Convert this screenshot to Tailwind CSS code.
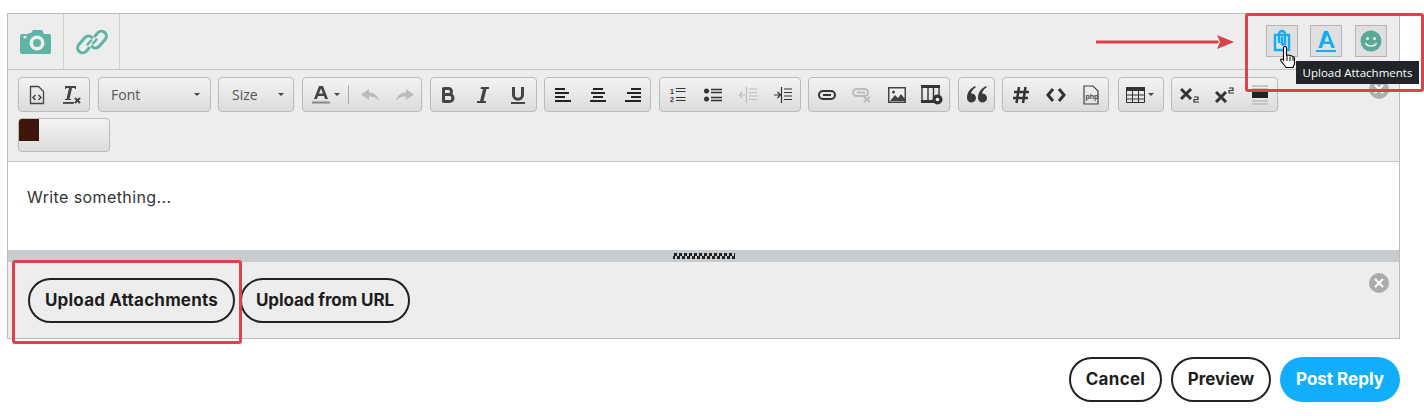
<!DOCTYPE html>
<html lang="en">
<head>
<meta charset="UTF-8">
<title>Reply editor</title>
<script src="https://cdn.jsdelivr.net/npm/@tailwindcss/browser@4"></script>
</head>
<body class="bg-white font-['Inter',sans-serif] text-[#1e1e1e] overflow-hidden">
<div class="relative w-[1424px] h-[416px] pt-[13px] pl-[7px]">

  <!-- editor box -->
  <div class="w-[1393px] h-[326px] border border-[#bcbcbc] bg-[#ededed] flex flex-col">

    <!-- top bar -->
    <div class="h-[56px] border-b border-[#c4c4c4] flex items-stretch">
      <div class="w-[56px] border-r border-[#d0d0d0] flex items-center justify-center">
        <svg width="32" height="26" viewBox="0 0 32 26"><path fill="#5fb5a5" d="M2 5h6l1-1h2l2-3h9l2 4h5a2 2 0 0 1 2 2v16a2 2 0 0 1-2 2H2a2 2 0 0 1-2-2V7a2 2 0 0 1 2-2z"/><circle cx="5" cy="8" r="1.600" fill="#ededed"/><circle cx="17" cy="14" r="7.500" fill="#ededed"/><circle cx="17" cy="14" r="4" fill="#5fb5a5"/></svg>
      </div>
      <div class="w-[56px] border-r border-[#d0d0d0] flex items-center justify-center">
        <svg width="32" height="28" viewBox="0 0 32 28" fill="none" stroke="#5fb5a5" stroke-width="3" stroke-linecap="round"><path d="M13 20l-3 3.500a5 5 0 0 1-7.500-6.500l6-7a5 5 0 0 1 7.500-.5"/><path d="M19 8l3-3.500a5 5 0 0 1 7.500 6.500l-6 7a5 5 0 0 1-7.500 .5"/><path d="M11.500 16.500l3.500-4" stroke-width="2.500"/><path d="M20.500 11.500l-3.500 4" stroke-width="2.500"/></svg>
      </div>
      <div class="ml-auto flex items-start pt-[11px] pr-[12px]">
        <div class="w-[32px] h-[32px] border border-[#b5b5b5] bg-[#dfdfdf] flex items-center justify-center">
          <svg width="20" height="24" viewBox="0 0 20 24" fill="none" stroke="#12aef5" stroke-width="2.400"><path d="M3 6h14v15H3z"/><path d="M7 14V5a3 3 0 0 1 6 0v10a2 2 0 0 1-3 0V8"/></svg>
        </div>
        <div class="ml-[12px] w-[32px] h-[32px] border border-[#b5b5b5] bg-[#dfdfdf] flex items-center justify-center">
          <svg width="22" height="24" viewBox="0 0 22 24"><path fill="#12aef5" d="M9 2h4l7 17h-3.500l-1.500-4H8.500L7 19H3.500zM9.500 12.500h5L12 6z"/><rect x="1" y="21" width="20" height="2" fill="#12aef5"/></svg>
        </div>
        <div class="ml-[13px] w-[32px] h-[32px] border border-[#b5b5b5] bg-[#dfdfdf] flex items-center justify-center">
          <svg width="22" height="22" viewBox="0 0 22 22"><circle cx="11" cy="11" r="10.500" fill="#5aa897"/><circle cx="7.500" cy="8.500" r="1.500" fill="#ededed"/><circle cx="14.500" cy="8.500" r="1.500" fill="#ededed"/><path d="M5.500 13c1.500 4 9.500 4 11 0" fill="none" stroke="#ededed" stroke-width="1.600"/></svg>
        </div>
      </div>
    </div>

    <!-- toolbar -->
    <div class="relative h-[92px] border-b border-[#c4c4c4] pt-[7px] pl-[10px]">
      <div class="flex items-start h-[35px] text-[#444]">
        <div class="w-[72px] h-[35px] mr-[8px] flex items-center rounded-[4px] border border-[#bbb] bg-linear-to-b from-[#f3f3f3] to-[#dcdcdc]">
          <span class="w-[35px] flex justify-center"><svg width="16" height="20" viewBox="0 0 16 20" fill="none" stroke="#444"><path d="M1.500 1.500h8l5 5v12h-13z" stroke-width="1.300"/><path d="M6.500 10l-2.500 2.500 2.500 2.500M9.500 10l2.500 2.500-2.500 2.500" stroke-width="1.500"/></svg></span>
          <span class="w-[35px] flex justify-center"><svg width="20" height="20" viewBox="0 0 20 20"><path fill="#444" d="M3 1h11v3h-1l-.500-1H10L7.500 14H9v1H3v-1h1.500L7 3H4.500L4 4H3z"/><rect x="1" y="17" width="11" height="1.800" fill="#444"/><path d="M13 13l5 5m0-5l-5 5" stroke="#444" stroke-width="2"/></svg></span>
        </div>
        <div class="w-[113px] h-[35px] mr-[7px] pl-[12px] pr-[10px] pb-[1px] flex items-center justify-between rounded-[4px] border border-[#bbb] bg-linear-to-b from-[#f3f3f3] to-[#dcdcdc] font-['Open_Sans',sans-serif] text-[14px] text-[#555]">
          <span>Font</span><span class="w-0 h-0 border-x-[3px] border-x-transparent border-t-[3px] border-t-[#444]"></span>
        </div>
        <div class="w-[76px] h-[35px] mr-[8px] pl-[13px] pr-[9px] pb-[1px] flex items-center justify-between rounded-[4px] border border-[#bbb] bg-linear-to-b from-[#f3f3f3] to-[#dcdcdc] font-['Open_Sans',sans-serif] text-[14px] text-[#555]">
          <span>Size</span><span class="w-0 h-0 border-x-[3px] border-x-transparent border-t-[3px] border-t-[#444]"></span>
        </div>
        <div class="w-[120px] h-[35px] mr-[8px] flex items-center rounded-[4px] border border-[#bbb] bg-linear-to-b from-[#f3f3f3] to-[#dcdcdc]">
          <span class="ml-[8px] w-[20px] flex justify-center"><svg width="20" height="20" viewBox="0 0 20 20"><path fill="#444" d="M8 1h4l5 13h-3l-1-3H7l-1 3H3zM8 8.500h4L10 3.500z"/><rect x="1" y="16.500" width="18" height="2" fill="#888"/></svg></span>
          <span class="ml-[3px] w-0 h-0 border-x-[3px] border-x-transparent border-t-[3px] border-t-[#444]"></span>
          <span class="ml-[8px] w-px h-[19px] bg-[#aaa]"></span>
          <span class="ml-[8px] w-[26px] flex justify-center"><svg width="20" height="16" viewBox="0 0 20 16"><path fill="#bbb" d="M9 2v3.500c5 0 9 3 10 8.500-2-3-5-4.500-10-4.500V13L1 7.500z"/></svg></span>
          <span class="ml-[9px] w-[26px] flex justify-center"><svg width="20" height="16" viewBox="0 0 20 16"><path fill="#bbb" d="M11 2v3.500c-5 0-9 3-10 8.500 2-3 5-4.500 10-4.500V13l8-5.500z"/></svg></span>
        </div>
        <div class="w-[107px] h-[35px] mr-[7px] flex items-center rounded-[4px] border border-[#bbb] bg-linear-to-b from-[#f3f3f3] to-[#dcdcdc]">
          <span class="w-[35px] flex justify-center -ml-[1px]"><svg width="14" height="18" viewBox="0 0 14 18" fill="none" stroke="#444" stroke-width="3"><path d="M2.500 1.500v15M2.500 2.500h5a3 3 0 0 1 0 6h-5m0 0h6a3.500 3.500 0 0 1 0 7h-6"/></svg></span>
          <span class="w-[35px] flex justify-center"><svg width="14" height="18" viewBox="0 0 14 18"><path fill="#444" d="M5 1h8v2h-2.500L7.500 15H10v2H1v-2h3L7 3H4.500z"/></svg></span>
          <span class="w-[35px] flex justify-center"><svg width="14" height="18" viewBox="0 0 14 18" fill="none" stroke="#444"><path d="M2.500 1v8c0 5.500 9 5.500 9 0V1" stroke-width="3"/><path d="M0 17h14" stroke-width="2"/></svg></span>
        </div>
        <div class="w-[107px] h-[35px] mr-[8px] flex items-center rounded-[4px] border border-[#bbb] bg-linear-to-b from-[#f3f3f3] to-[#dcdcdc]">
          <span class="w-[35px] flex justify-center"><svg width="16" height="14" viewBox="0 0 16 14" stroke="#222" stroke-width="2"><path d="M0 1h10M0 5h14M0 9h10M0 13h16"/></svg></span>
          <span class="w-[35px] flex justify-center"><svg width="16" height="14" viewBox="0 0 16 14" stroke="#222" stroke-width="2"><path d="M3 1h10M1 5h14M3 9h10M0 13h16"/></svg></span>
          <span class="w-[35px] flex justify-center"><svg width="16" height="14" viewBox="0 0 16 14" stroke="#222" stroke-width="2"><path d="M6 1h10M2 5h14M6 9h10M0 13h16"/></svg></span>
        </div>
        <div class="w-[142px] h-[35px] mr-[7px] flex items-center rounded-[4px] border border-[#bbb] bg-linear-to-b from-[#f3f3f3] to-[#dcdcdc]">
          <span class="w-[35px] flex justify-center"><svg width="16" height="16" viewBox="0 0 16 16"><path stroke="#333" stroke-width="1.200" d="M6 1.500h9.500M6 4.500h9.500M6 10.500h9.500M6 13.500h9.500"/><text x="0" y="7" font-size="7" font-weight="700" fill="#333" font-family="Liberation Sans">1</text><text x="0" y="15" font-size="7" font-weight="700" fill="#333" font-family="Liberation Sans">2</text></svg></span>
          <span class="w-[35px] flex justify-center"><svg width="18" height="14" viewBox="0 0 18 14"><circle cx="2.500" cy="3" r="2.500" fill="#333"/><circle cx="2.500" cy="11" r="2.500" fill="#333"/><path stroke="#333" stroke-width="1.300" d="M7 1.500h11M7 4.500h11M7 9.500h11M7 12.500h11"/></svg></span>
          <span class="w-[35px] flex justify-center"><svg width="18" height="16" viewBox="0 0 18 16" stroke="#bbb" stroke-width="1.200" fill="none"><path d="M7.500 0v16M10 2h8M10 5.500h8M10 9h8M10 12.500h8M0 8h6M3 5L0.500 8 3 11"/></svg></span>
          <span class="w-[35px] flex justify-center"><svg width="18" height="16" viewBox="0 0 18 16" stroke="#333" stroke-width="1.200" fill="none"><path d="M7.500 0v16M10 2h8M10 5.500h8M10 9h8M10 12.500h8M0 8h6M3.500 5L6.500 8l-3 3"/></svg></span>
        </div>
        <div class="w-[142px] h-[35px] mr-[8px] flex items-center rounded-[4px] border border-[#bbb] bg-linear-to-b from-[#f3f3f3] to-[#dcdcdc]">
          <span class="w-[35px] flex justify-center"><svg width="18" height="10" viewBox="0 0 18 10" fill="none" stroke="#333" stroke-width="2"><rect x="1" y="1" width="16" height="8" rx="4"/><path d="M5 5h8"/></svg></span>
          <span class="w-[35px] flex justify-center"><svg width="20" height="16" viewBox="0 0 20 16" fill="none" stroke="#bbb" stroke-width="2"><rect x="1" y="2" width="15" height="7" rx="3.500"/><path d="M5 5.500h8M12 10l6 5m0-5l-6 5"/></svg></span>
          <span class="w-[35px] flex justify-center"><svg width="18" height="16" viewBox="0 0 18 16"><path fill="#444" d="M0 0h18v16H0z"/><path fill="#eee" d="M1.500 1.500h15v13h-15z"/><path fill="#444" d="M2 14l5-6 3 3 3-4 4 5v2z"/><circle cx="5.500" cy="5" r="1.500" fill="#444"/></svg></span>
          <span class="w-[35px] flex justify-center"><svg width="22" height="20" viewBox="0 0 22 20"><path fill="#333" d="M0 0h19v3H0zM0 15h13v3H0z"/><path fill="none" stroke="#333" stroke-width="1.400" d="M1 3v12M7 3v12M12.500 3v12M18 3v7"/><circle cx="16.500" cy="14.500" r="5" fill="#333"/><circle cx="16.500" cy="14.500" r="1.800" fill="#eee"/></svg></span>
        </div>
        <div class="w-[37px] h-[35px] mr-[7px] flex items-center justify-center rounded-[4px] border border-[#bbb] bg-linear-to-b from-[#f3f3f3] to-[#dcdcdc]">
          <svg width="20" height="17" viewBox="0 0 20 17"><path fill="#3a3a3a" d="M8.500 0C3.500 2 0 6 0 12a4.500 4.500 0 1 0 4-4.400C4.500 5 6 3 8.500 1.500zM19.500 0c-5 2-8.500 6-8.500 12a4.500 4.500 0 1 0 4-4.400c.5-2.600 2-4.600 4.500-6.100z"/></svg>
        </div>
        <div class="w-[107px] h-[35px] mr-[9px] flex items-center rounded-[4px] border border-[#bbb] bg-linear-to-b from-[#f3f3f3] to-[#dcdcdc]">
          <span class="w-[35px] flex justify-center"><svg width="16" height="18" viewBox="0 0 16 18" fill="none" stroke="#333" stroke-width="2.500"><path d="M6 1L3.500 17M12.500 1L10 17M1 6h15M0 12h15"/></svg></span>
          <span class="w-[35px] flex justify-center"><svg width="20" height="14" viewBox="0 0 20 14" fill="none" stroke="#333" stroke-width="3"><path d="M7 1L2 7l5 6M13 1l5 6-5 6"/></svg></span>
          <span class="w-[35px] flex justify-center"><svg width="18" height="20" viewBox="0 0 18 20" fill="none" stroke="#444" stroke-width="1.200"><path d="M2 19V1h9l5 5v13z"/><text x="3.500" y="14" font-size="7" font-weight="700" fill="#444" stroke="none" font-family="Liberation Sans">php</text></svg></span>
        </div>
        <div class="w-[46px] h-[35px] mr-[7px] pl-[7px] flex items-center gap-[3px] rounded-[4px] border border-[#bbb] bg-linear-to-b from-[#f3f3f3] to-[#dcdcdc]">
          <svg width="19" height="16" viewBox="0 0 19 16"><path fill="#333" d="M0 0h19v4H0z"/><path fill="none" stroke="#333" d="M.500 4v11.500h18V4M.500 8h18M.500 12h18M6.500 4v11M12.500 4v11"/></svg>
          <span class="w-0 h-0 border-x-[3px] border-x-transparent border-t-[3px] border-t-[#444]"></span>
        </div>
        <div class="w-[107px] h-[35px] flex items-center rounded-[4px] border border-[#bbb] bg-linear-to-b from-[#f3f3f3] to-[#dcdcdc]">
          <span class="w-[35px] flex justify-center"><svg width="20" height="16" viewBox="0 0 20 16"><path stroke="#333" stroke-width="3" d="M1 2l10 10m0-10L1 12"/><path fill="none" stroke="#333" stroke-width="1.200" d="M14 10h4v2.500h-4V15h5"/></svg></span>
          <span class="w-[35px] flex justify-center"><svg width="20" height="16" viewBox="0 0 20 16"><path stroke="#333" stroke-width="3" d="M1 5l10 10m0-10L1 15"/><path fill="none" stroke="#333" stroke-width="1.200" d="M14 1h4v2.500h-4V6h5"/></svg></span>
          <span class="w-[35px] flex justify-center"><svg width="16" height="20" viewBox="0 0 16 20"><path stroke="#bbb" stroke-width="1.500" d="M0 1h16M0 4h16M0 16h16M0 19h16"/><path fill="#222" d="M0 7h16v6H0z"/></svg></span>
        </div>
      </div>
      <div class="relative w-[92px] h-[34px] mt-[6px] rounded-[4px] border border-[#bbb] bg-linear-to-b from-[#f3f3f3] to-[#dcdcdc]">
        <span class="absolute left-0 top-0 w-[20px] h-[22px] bg-[#3d170b] rounded-tl-[3px]"></span>
      </div>
      <!-- close icon, partly covered by the red frame -->
      <span class="absolute left-[1361px] top-[9px] w-[20px] h-[20px] rounded-full bg-[#b0b0b0] flex items-center justify-center"><svg width="10" height="10" viewBox="0 0 10 10"><path stroke="#fff" stroke-width="2" d="M1 1l8 8m0-8L1 9"/></svg></span>
    </div>

    <!-- text area -->
    <div class="h-[88px] bg-white pt-[24px] pl-[19px] text-[16px] leading-[22px] tracking-[0.4px] text-[#333]">Write something...</div>

    <!-- resize bar -->
    <div class="h-[12px] bg-[#c9ccce] flex items-center justify-center">
      <svg width="62" height="6" viewBox="0 0 62 6">
        <pattern id="grip" width="5" height="6" patternUnits="userSpaceOnUse"><path fill="#222" d="M1 0h3v3H1zM0 3h2v3H0zM4 3h1v3H4z"/></pattern>
        <rect width="62" height="6" fill="url(#grip)"/>
      </svg>
    </div>

    <!-- upload area -->
    <div class="relative flex-1 flex items-start pt-[16px] pl-[20px] gap-[5px]">
      <button class="h-[45px] w-[207px] rounded-full border-2 border-[#222] text-[17px] tracking-[0.2px] font-bold text-[#1e1e1e]">Upload Attachments</button>
      <button class="h-[45px] w-[170px] rounded-full border-2 border-[#222] text-[17px] tracking-[-0.1px] font-bold text-[#1e1e1e]">Upload from URL</button>
      <span class="absolute right-[10px] top-[11px] w-[20px] h-[20px] rounded-full bg-[#acacac] flex items-center justify-center"><svg width="10" height="10" viewBox="0 0 10 10"><path stroke="#fff" stroke-width="2" d="M1 1l8 8m0-8L1 9"/></svg></span>
    </div>
  </div>

  <!-- actions -->
  <div class="w-[1393px] mt-[18px] flex justify-end gap-[9px]">
    <button class="h-[45px] w-[93px] rounded-full border-2 border-[#222] text-[17px] tracking-[0.3px] font-bold text-[#1e1e1e]">Cancel</button>
    <button class="h-[45px] w-[100px] rounded-full border-2 border-[#222] text-[17px] font-bold text-[#1e1e1e]">Preview</button>
    <button class="h-[45px] w-[120px] rounded-full bg-[#12aefb] text-[17px] font-bold text-white">Post Reply</button>
  </div>

  <!-- annotations -->
  <div class="absolute left-[1245px] top-[13px] w-[179px] h-[79px] border-[3px] border-[#d9434c] rounded-[3px]"></div>
  <div class="absolute left-[12px] top-[260px] w-[230px] h-[84px] border-[3px] border-[#d9434c] rounded-[3px]"></div>
  <div class="absolute left-[1096px] top-[35px]">
    <svg width="138" height="14" viewBox="0 0 138 14"><path d="M0 6h122v2H0z" fill="#d9434c" stroke="#d9434c"/><path d="M121 0l17 7-17 7 3-7z" fill="#d9434c"/></svg>
  </div>
  <div class="absolute left-[1296px] top-[61px] w-[123px] h-[23px] bg-[#212428] text-white text-[11.500px] leading-[23px] text-center font-['Open_Sans',sans-serif]">Upload Attachments</div>
  <div class="absolute left-[1279px] top-[46px]">
    <svg width="20" height="24" viewBox="0 0 20 24"><path fill="#fff" stroke="#000" stroke-width="1.100" d="M4.500 2a1.500 1.500 0 0 1 3 0v7.500l1.500-.5 1.500.3 1.500.4 1.500.5c1.500.3 2 1 2 2.300V17c0 2-1 3-1.500 4.500H7c-1-1.500-3-4-5-6.500-.7-1-.3-2 .7-2 .8 0 1.300.5 1.800 1.200z"/><path stroke="#000" d="M8 10v5M11 10.500v4.500M14 11v4"/></svg>
  </div>
</div>
</body>
</html>
